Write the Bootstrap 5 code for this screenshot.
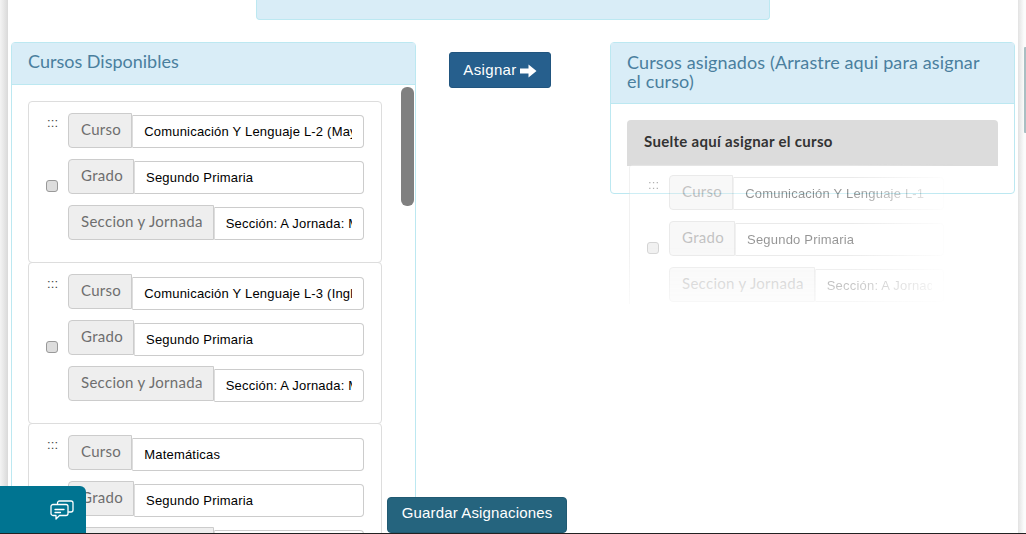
<!DOCTYPE html>
<html lang="es">
<head>
<meta charset="utf-8">
<title>Asignaciones</title>
<link rel="stylesheet" href="https://cdn.jsdelivr.net/npm/bootstrap@5.3.0/dist/css/bootstrap.min.css">
<script src="https://cdn.jsdelivr.net/npm/bootstrap@5.3.0/dist/js/bootstrap.bundle.min.js"></script>
<style>
html{height:534px;overflow:hidden;background:#fff}
body{height:534px;overflow:hidden;font-family:"Liberation Sans",Arial,sans-serif;border-bottom:1px solid #222;position:relative;background:linear-gradient(to right,#f4f4f4,#d9d9d9 8px,#fff 8px,#fff 1018px,#e2e2e2 1018px,#fbfbfb 1024px)}
.page-shell{height:533px;margin:0 8px;padding:0 3px;background:#fff;position:relative;overflow:hidden}
.top-strip{width:514px;height:20px;margin-left:245px;background:#d9edf7;border:1px solid #bce8f1;border-top:0;border-radius:0 0 4px 4px}
.panels{margin-top:22px;align-items:flex-start}
.panel-box{width:405px;border:1px solid #bce8f1;border-radius:4px;background:#fff}
.panel-head{background:#d9edf7;border-bottom:1px solid #bce8f1;color:#4a7f9e;font-family:Lato,"Open Sans",sans-serif;font-size:18px;line-height:19px;padding:10px 30px 12px 16px;letter-spacing:.12px}
.left-box{height:600px;position:relative}
.left-box .panel-head{height:42px;padding-top:9px;letter-spacing:0}
.left-list{padding:16px 33px 0 16px}
.course-item{border:1px solid #ddd;border-radius:4px;height:162px;margin-top:-1px;padding:11px 17px 0 17px;gap:10px;background:#fff}
.course-item:first-child{margin-top:0}
.course-item + .course-item .form-control{margin-top:3px}
.grab-col{width:12px;flex:none;position:relative}
.grip{display:block;margin:0 0 0 1px;height:20px;line-height:20px;font-size:13px;color:#444;letter-spacing:.1px}
.course-check{display:block;width:12px;height:12px;margin:0;position:absolute;top:67px;left:0;background:#ddd;border:1px solid #999;border-radius:3px;appearance:none}
.fields{flex:1;min-width:0}
.field-line{margin-bottom:11px;height:35px;flex-wrap:nowrap}
.field-line .input-group-text{background:#eee;border-color:#ccc;color:#6e6e6e;font-family:Lato,"Open Sans",sans-serif;font-size:15px;letter-spacing:.3px;padding:0 10px 3px 12px;border-radius:4px 0 0 4px}
.field-line .form-control{margin-top:2px;height:33px;border-color:#ccc;border-radius:0 4px 4px 0!important;border-left-color:#ddd;color:#000;font-family:"Liberation Sans",Arial,sans-serif;font-size:13px;letter-spacing:.2px;padding:0 11px;box-shadow:none;min-width:0;margin-left:0!important}
.fake-scroll{position:absolute;left:389px;top:44px;width:13px;height:119px;border-radius:6px;background:#808080}
.middle-col{width:194px;flex:none;padding:10px 0 0 33px}
.assign-btn{background:#265f8d;border:1px solid #21557f;color:#fff;font-size:15px;letter-spacing:.35px;height:36px;width:102px;padding:0;border-radius:3px;gap:3px}
.assign-btn svg{width:17px;height:14px;margin-top:1px}
.right-box{height:152px}
.right-body{padding:16px}
.drop-zone{background:#dcdcdc;height:46px;color:#333;font-weight:700;font-size:15px;letter-spacing:.3px;padding:0 17px;line-height:43px;border-radius:4px 4px 0 0;font-family:Lato,"Liberation Sans",sans-serif}
.drag-ghost{position:absolute;left:621px;top:164px;width:354px;height:140px;opacity:.42;padding:10px 17px 0 17px;gap:10px;border:1px solid #ddd;border-bottom:0;background:rgba(255,255,255,.65);-webkit-mask-image:linear-gradient(to right,#000 62%,transparent 92%),linear-gradient(to bottom,#000 60%,rgba(0,0,0,.35) 100%);mask-image:linear-gradient(to right,#000 62%,transparent 92%),linear-gradient(to bottom,#000 60%,rgba(0,0,0,.35) 100%);-webkit-mask-composite:source-in;mask-composite:intersect;overflow:hidden;border-radius:4px 0 0 0}
.drag-ghost .fields{width:275px;flex:none}
.chat-tab{position:absolute;left:0;top:486px;width:86px;height:48px;background:#007491;border-radius:0 6px 0 0}
.chat-tab svg{position:absolute;left:50px;top:13px;width:24px;height:22px}
.save-btn{position:absolute;left:379px;bottom:0;width:180px;height:36px;padding:0 0 4px;background:#25647e;border:1px solid #215a72;color:#fff;font-size:15px;letter-spacing:.15px;border-radius:4px}
.edge-bar{position:absolute;right:0;top:47px;width:2px;height:86px;background:#a9bfc3;border-radius:1px 0 0 1px}
</style>
</head>
<body>
<div class="page-shell">
  <div class="top-strip"></div>
  <div class="panels d-flex">
    <section class="panel-box left-box">
      <div class="panel-head">Cursos Disponibles</div>
      <div class="left-list">
        <div class="course-item d-flex">
          <div class="grab-col"><span class="grip">:::</span><input class="course-check" type="checkbox" aria-label="Seleccionar"></div>
          <div class="fields">
            <div class="input-group field-line"><span class="input-group-text">Curso</span><input class="form-control" value="Comunicación Y Lenguaje L-2 (Maya)" readonly></div>
            <div class="input-group field-line"><span class="input-group-text">Grado</span><input class="form-control" value="Segundo Primaria" readonly></div>
            <div class="input-group field-line"><span class="input-group-text">Seccion y Jornada</span><input class="form-control" value="Sección: A Jornada: Matutina" readonly></div>
          </div>
        </div>
        <div class="course-item d-flex">
          <div class="grab-col"><span class="grip">:::</span><input class="course-check" type="checkbox" aria-label="Seleccionar"></div>
          <div class="fields">
            <div class="input-group field-line"><span class="input-group-text">Curso</span><input class="form-control" value="Comunicación Y Lenguaje L-3 (Inglés)" readonly></div>
            <div class="input-group field-line"><span class="input-group-text">Grado</span><input class="form-control" value="Segundo Primaria" readonly></div>
            <div class="input-group field-line"><span class="input-group-text">Seccion y Jornada</span><input class="form-control" value="Sección: A Jornada: Matutina" readonly></div>
          </div>
        </div>
        <div class="course-item d-flex">
          <div class="grab-col"><span class="grip">:::</span><input class="course-check" type="checkbox" aria-label="Seleccionar"></div>
          <div class="fields">
            <div class="input-group field-line"><span class="input-group-text">Curso</span><input class="form-control" value="Matemáticas" readonly></div>
            <div class="input-group field-line"><span class="input-group-text">Grado</span><input class="form-control" value="Segundo Primaria" readonly></div>
            <div class="input-group field-line"><span class="input-group-text">Seccion y Jornada</span><input class="form-control" value="Sección: A Jornada: Matutina" readonly></div>
          </div>
        </div>
      </div>
      <div class="fake-scroll"></div>
    </section>
    <div class="middle-col">
      <button class="btn assign-btn d-inline-flex align-items-center justify-content-center" type="button">Asignar
        <svg viewBox="0 0 17 14" aria-hidden="true"><path fill="#fff" d="M0 4.500h8.500V.5L16.500 7l-8 6.500v-4H0z"/></svg>
      </button>
    </div>
    <section class="panel-box right-box">
      <div class="panel-head">Cursos asignados (Arrastre aqui para asignar el curso)</div>
      <div class="right-body"><div class="drop-zone">Suelte aquí asignar el curso</div></div>
    </section>
  </div>
  <div class="drag-ghost d-flex">
    <div class="grab-col"><span class="grip">:::</span><input class="course-check" type="checkbox" aria-label="Seleccionar"></div>
    <div class="fields">
      <div class="input-group field-line"><span class="input-group-text">Curso</span><input class="form-control" value="Comunicación Y Lenguaje L-1" readonly></div>
      <div class="input-group field-line"><span class="input-group-text">Grado</span><input class="form-control" value="Segundo Primaria" readonly></div>
      <div class="input-group field-line"><span class="input-group-text">Seccion y Jornada</span><input class="form-control" value="Sección: A Jornada: Matutina" readonly></div>
    </div>
  </div>
  <button class="btn save-btn" type="button">Guardar Asignaciones</button>
</div>
<div class="chat-tab">
  <svg viewBox="0 0 24 22" fill="none" stroke="#fff" stroke-width="1.3" stroke-linejoin="round" stroke-linecap="round" aria-hidden="true">
    <path d="M7.500 4.500V4a2 2 0 0 1 2-2h11.500a2 2 0 0 1 2 2v7a2 2 0 0 1-2 2h-2.500"/>
    <path d="M3 5.500h13a2 2 0 0 1 2 2v7a2 2 0 0 1-2 2H9.500L6 20v-3.500H3a2 2 0 0 1-2-2v-7a2 2 0 0 1 2-2z"/>
    <path d="M5 10.500h9M5 13.500h5.500"/>
  </svg>
</div>
<div class="edge-bar"></div>
</body>
</html>
